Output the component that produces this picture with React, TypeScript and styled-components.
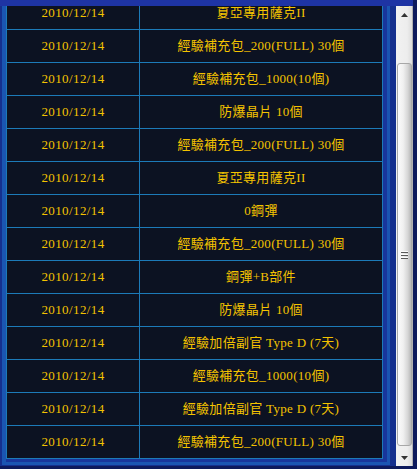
import styled, { createGlobalStyle } from "styled-components";

const Global = createGlobalStyle`
  html, body {
    margin: 0;
    padding: 0;
    background: #1e34a4;
    overflow: hidden;
  }
`;

const rows: string[] = [
  "夏亞專用薩克II",
  "經驗補充包_200(FULL) 30個",
  "經驗補充包_1000(10個)",
  "防爆晶片 10個",
  "經驗補充包_200(FULL) 30個",
  "夏亞專用薩克II",
  "0鋼彈",
  "經驗補充包_200(FULL) 30個",
  "鋼彈+B部件",
  "防爆晶片 10個",
  "經驗加倍副官 Type D (7天)",
  "經驗補充包_1000(10個)",
  "經驗加倍副官 Type D (7天)",
  "經驗補充包_200(FULL) 30個",
];

export default function App() {
  return (
    <>
      <Global />
      <Page>
        <Scroller>
          <Viewport>
            <Frame>
              <Table>
                <tbody>
                  {rows.map((item, i) => (
                    <tr key={i}>
                      <DateCell>2010/12/14</DateCell>
                      <ItemCell>{item}</ItemCell>
                    </tr>
                  ))}
                </tbody>
              </Table>
            </Frame>
          </Viewport>
          <ScrollBar>
            <ArrowBtn>
              <svg width="7" height="4" viewBox="0 0 7 4">
                <path d="M3.5 0 L7 4 L0 4 Z" fill="#333" />
              </svg>
            </ArrowBtn>
            <Track>
              <Thumb>
                <Grip />
                <Grip />
                <Grip />
              </Thumb>
            </Track>
            <ArrowBtn>
              <svg width="7" height="4" viewBox="0 0 7 4">
                <path d="M0 0 L7 0 L3.5 4 Z" fill="#333" />
              </svg>
            </ArrowBtn>
          </ScrollBar>
        </Scroller>
      </Page>
    </>
  );
}

const Page = styled.div`
  width: 417px;
  height: 469px;
  box-sizing: border-box;
  padding-top: 6px;
  border-right: 4px solid #0d1a5c;
  border-bottom: 3px solid #0d1a5c;
  background: #1e34a4;
`;

const Scroller = styled.div`
  display: flex;
  height: 460px;
`;

const Viewport = styled.div`
  width: 396px;
  height: 460px;
  overflow: hidden;
  background: #15308e;
`;

const Frame = styled.div`
  margin-top: -13px;
  margin-left: 2px;
  width: 388px;
  box-sizing: border-box;
  border: 3px solid #1a55b2;
  border-left-width: 4px;
  padding: 0 4px 3px 0;
  background: #18369c;
`;

const Table = styled.table`
  border-collapse: collapse;
  width: 377px;
  background: #0c1222;
  border: 1px solid #1c7ab8;
  font-family: "Liberation Serif", "Noto Sans CJK TC", serif;
  font-size: 13px;
  color: #f4c300;
`;

const Cell = styled.td`
  border: 1px solid #1c7ab8;
  height: 32px;
  padding: 0;
  text-align: center;
  vertical-align: middle;
  white-space: nowrap;
  line-height: 16px;
`;

const DateCell = styled(Cell)`
  width: 132px;
  letter-spacing: 0.4px;
`;

const ItemCell = styled(Cell)`
  letter-spacing: 0.3px;
`;

const ScrollBar = styled.div`
  width: 17px;
  height: 460px;
  display: flex;
  flex-direction: column;
  background: linear-gradient(to right, #f2f2f2 0%, #ededed 70%, #dcdcdc 100%);
  border-right: 1px solid #b0b0b0;
  box-sizing: border-box;
`;

const ArrowBtn = styled.div`
  height: 17px;
  display: flex;
  align-items: center;
  justify-content: center;
  flex: none;
`;

const Track = styled.div`
  flex: 1;
  display: flex;
  flex-direction: column;
  justify-content: flex-end;
  padding: 0 0 3px 1px;
`;

const Thumb = styled.div`
  height: 381px;
  border-radius: 3px;
  border: 1px solid #a8a8a8;
  background: linear-gradient(to right, #fbfbfb 0%, #f0f0f0 40%, #d6d6d6 75%, #b8b8b8 100%);
  display: flex;
  flex-direction: column;
  align-items: center;
  justify-content: center;
  gap: 1px;
`;

const Grip = styled.div`
  width: 7px;
  height: 1px;
  border-bottom: 1px solid #5a5a5a;
  background: #fafafa;
`;
